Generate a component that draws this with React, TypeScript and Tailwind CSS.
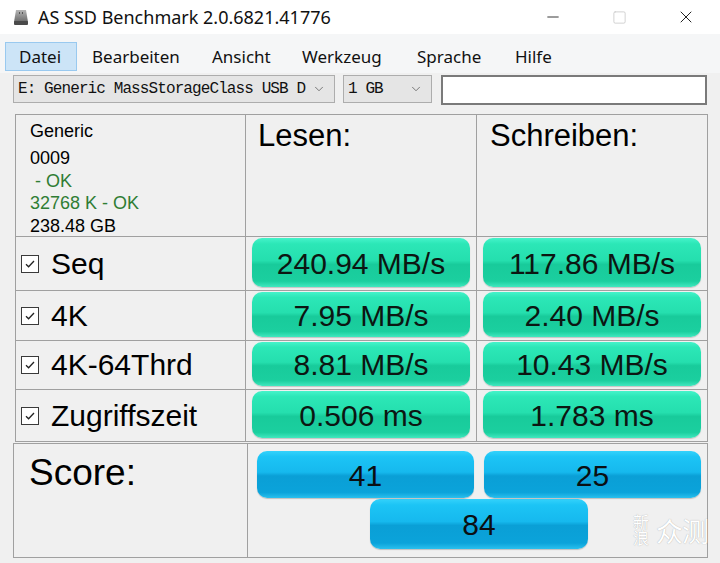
import { ChevronDown, Minus, Square, X } from "lucide-react";

const menuItems = [
  { label: "Datei", width: "w-[72px]", pad: "pl-[13px]", active: true },
  { label: "Bearbeiten", width: "w-[122px]", pad: "pl-[15px]", active: false },
  { label: "Ansicht", width: "w-[90px]", pad: "pl-[13px]", active: false },
  { label: "Werkzeug", width: "w-[115px]", pad: "pl-[13px]", active: false },
  { label: "Sprache", width: "w-[98px]", pad: "pl-[13px]", active: false },
  { label: "Hilfe", width: "w-[60px]", pad: "pl-[13px]", active: false },
];

const rows = [
  { name: "Seq", read: "240.94 MB/s", write: "117.86 MB/s", height: "h-[54px]" },
  { name: "4K", read: "7.95 MB/s", write: "2.40 MB/s", height: "h-[50px]" },
  { name: "4K-64Thrd", read: "8.81 MB/s", write: "10.43 MB/s", height: "h-[49px]" },
  { name: "Zugriffszeit", read: "0.506 ms", write: "1.783 ms", height: "h-[52px]" },
];

const DriveIcon = () => (
  <svg width="14" height="16" viewBox="0 0 14 16">
    <defs>
      <linearGradient id="hdd" x1="0" y1="0" x2="0" y2="1">
        <stop offset="0" stopColor="#b5b5b5" />
        <stop offset="1" stopColor="#6a6a6a" />
      </linearGradient>
    </defs>
    <path d="M2 1h10l2 12H0z" fill="url(#hdd)" />
    <rect x="0" y="12" width="14" height="4" rx="1" fill="#4a4a4a" />
    <rect x="5" y="3" width="1" height="2" fill="#555" />
    <rect x="8" y="3" width="1" height="2" fill="#555" />
  </svg>
);

const CheckBox = () => (
  <div className="flex h-[18px] w-[18px] items-center justify-center border border-[#3a3a3a] bg-white">
    <svg width="12" height="12" viewBox="0 0 12 12">
      <path d="M2 6.2l2.6 2.6L10 3" fill="none" stroke="#222" strokeWidth="1.3" />
    </svg>
  </div>
);

const GreenBar = ({ value }: { value: string }) => (
  <div className="flex h-full items-center justify-center rounded-[10px] bg-[linear-gradient(180deg,#45f3ca_0%,#2ce7b7_12%,#25dfae_46%,#18cb9b_54%,#1bcf9f_88%,#40e8bf_100%)] pt-[2px] text-[30px] leading-none text-[#0c1612] shadow-[0_1px_1px_rgba(0,0,0,0.18)]">
    {value}
  </div>
);

const BlueBar = ({ value, className }: { value: string; className: string }) => (
  <div
    className={
      "flex items-center justify-center rounded-[10px] bg-[linear-gradient(180deg,#34d2fb_0%,#1cc4f5_12%,#16b9ee_45%,#0a9fd6_53%,#0ba3da_88%,#2ac0ee_100%)] pt-[2px] text-[30px] leading-none text-[#0b0f12] shadow-[0_1px_1px_rgba(0,0,0,0.2)] " +
      className
    }
  >
    {value}
  </div>
);

export default function App() {
  return (
    <div className="relative h-[563px] w-[720px] overflow-hidden bg-[#f0f0f0] font-['Liberation_Sans',Arial,sans-serif] text-black">
      {/* Title bar */}
      <div className="flex h-[34px] items-center bg-white font-['Noto_Sans','Noto_Sans_CJK_SC',sans-serif]">
        <div className="ml-[14px] flex items-center">
          <DriveIcon />
        </div>
        <span className="ml-[10px] text-[18px] leading-none text-[#111]">
          AS SSD Benchmark 2.0.6821.41776
        </span>
        <div className="ml-auto flex h-full">
          <div className="flex w-[66px] items-center justify-center">
            <Minus size={18} strokeWidth={1.2} color="#222" />
          </div>
          <div className="flex w-[66px] items-center justify-center">
            <Square size={15} strokeWidth={1.2} color="#c4c4c4" />
          </div>
          <div className="flex w-[68px] items-center justify-center">
            <X size={20} strokeWidth={1.2} color="#222" />
          </div>
        </div>
      </div>

      {/* Menu bar */}
      <div className="flex h-[39px] bg-[#f5f6f7] pl-[5px] pt-[8px] font-['Noto_Sans','Noto_Sans_CJK_SC',sans-serif] text-[17px] text-[#111]">
        {menuItems.map((m) => (
          <div
            key={m.label}
            className={
              "flex h-[29px] items-center " +
              m.width +
              " " +
              m.pad +
              (m.active ? " border border-[#99c9ef] bg-[#cce4f7]" : "")
            }
          >
            {m.label}
          </div>
        ))}
      </div>

      {/* Toolbar */}
      <div className="flex items-start gap-[8px] pl-[13px] pt-[2px]">
        <div className="flex h-[28px] w-[322px] items-center justify-between border border-[#adadad] bg-[#e5e5e5] pl-[4px] pr-[8px]">
          <span className="font-['Liberation_Mono',monospace] text-[16px] tracking-[-0.9px] text-[#111]">
            E: Generic MassStorageClass USB D
          </span>
          <ChevronDown size={14} strokeWidth={1.3} color="#555" />
        </div>
        <div className="flex h-[28px] w-[89px] items-center justify-between border border-[#adadad] bg-[#e5e5e5] pl-[4px] pr-[8px]">
          <span className="font-['Liberation_Mono',monospace] text-[16px] tracking-[-0.9px] text-[#111]">
            1 GB
          </span>
          <ChevronDown size={14} strokeWidth={1.3} color="#555" />
        </div>
        <div className="ml-[1px] h-[30px] w-[266px] border-2 border-[#7a7a7a] bg-white" />
      </div>

      {/* Results table */}
      <div className="ml-[15px] mt-[9px] grid w-[693px] grid-cols-[230px_231px_231px] border-l border-t border-[#a0a0a0]">
        <div className="h-[122px] border-b border-r border-[#a0a0a0] pl-[14px] pt-[5px] text-[18px] leading-[22.5px]">
          <div>Generic</div>
          <div className="mt-[4.5px]">0009</div>
          <div className="whitespace-pre text-[#2f7d34]"> - OK</div>
          <div className="text-[#2f7d34]">32768 K - OK</div>
          <div>238.48 GB</div>
        </div>
        <div className="h-[122px] border-b border-r border-[#a0a0a0] pl-[12px] pt-[5px] text-[31px] leading-none">
          Lesen:
        </div>
        <div className="h-[122px] border-b border-r border-[#a0a0a0] pl-[13px] pt-[5px] text-[31px] leading-none">
          Schreiben:
        </div>

        {rows.map((r) => (
          <div key={r.name} className="contents">
            <div
              className={
                "flex items-center gap-[12px] border-b border-r border-[#a0a0a0] pl-[5px] " + r.height
              }
            >
              <CheckBox />
              <span className="text-[30px] leading-none">{r.name}</span>
            </div>
            <div className={"border-b border-r border-[#a0a0a0] px-[6px] pb-[3px] pt-[1px] " + r.height}>
              <GreenBar value={r.read} />
            </div>
            <div className={"border-b border-r border-[#a0a0a0] px-[6px] pb-[3px] pt-[1px] " + r.height}>
              <GreenBar value={r.write} />
            </div>
          </div>
        ))}
      </div>

      {/* Score */}
      <div className="ml-[13px] mt-[1px] flex h-[115px] w-[695px] border border-[#a0a0a0]">
        <div className="w-[234px] border-r border-[#a0a0a0] pl-[15px] pt-[10px] text-[37px] leading-none">
          Score:
        </div>
        <div className="flex-1 pl-[9px] pr-[6px] pt-[7px]">
          <div className="grid grid-cols-2 gap-x-[10px]">
            <BlueBar value="41" className="h-[47px]" />
            <BlueBar value="25" className="h-[47px]" />
          </div>
          <BlueBar value="84" className="mx-auto mt-[1px] h-[50px] w-[218px]" />
        </div>
      </div>

      {/* Watermark */}
      <div className="absolute left-[631px] top-[514px] flex items-center gap-[5px] font-['Noto_Sans_CJK_SC',sans-serif] text-white [text-shadow:0_0_1px_rgba(0,0,0,0.35)]">
        <span className="text-[16px] leading-[20px] [writing-mode:vertical-rl]">新浪</span>
        <span className="text-[27px] leading-none tracking-[-1px]">众测</span>
      </div>
    </div>
  );
}
